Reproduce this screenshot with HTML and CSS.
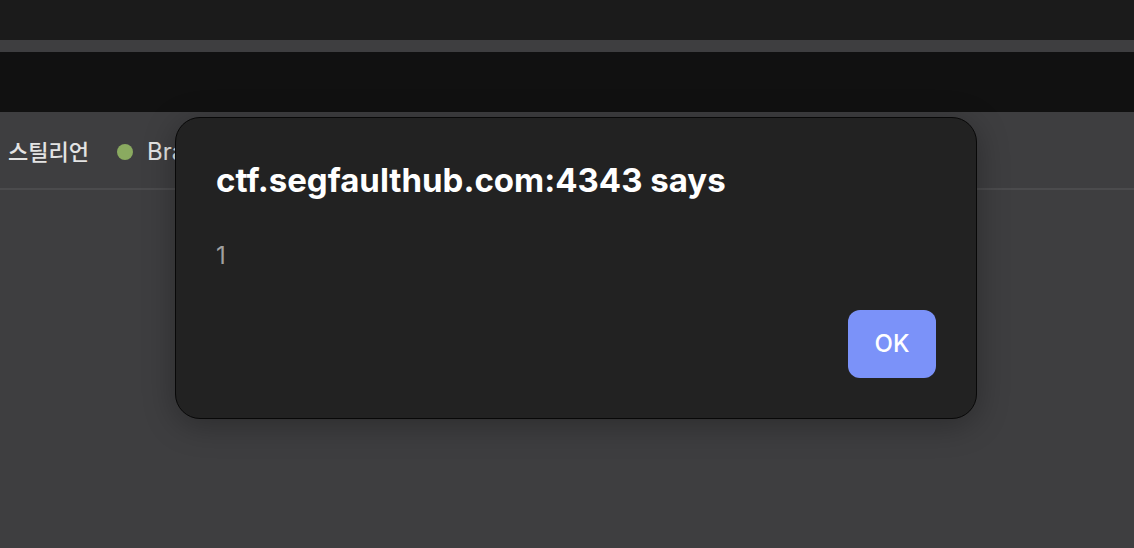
FILE: index.html
```html
<!DOCTYPE html>
<html lang="en">
<head>
<meta charset="utf-8">
<title>ctf.segfaulthub.com:4343</title>
<link rel="stylesheet" href="styles.css">
</head>
<body>
<div class="tab-strip"></div>
<div class="toolbar"></div>
<nav class="bookmarks">
  <a class="bookmark korean" href="#" lang="ko">스틸리언</a>
  <a class="bookmark" href="#"><span class="dot"></span>Brave</a>
</nav>
<div class="dialog" role="alertdialog" aria-labelledby="title" aria-describedby="message">
  <h1 class="title" id="title">ctf.segfaulthub.com:4343 says</h1>
  <p class="message" id="message">1</p>
  <div class="actions"><button class="ok" type="button">OK</button></div>
</div>
</body>
</html>
```
FILE: styles.css
```css
* { box-sizing: border-box; }
body {
  margin: 0;
  min-height: 100vh;
  background: #3e3e40;
  color: #e3e3e3;
  font-family: Inter, "Noto Sans CJK KR", sans-serif;
  overflow: hidden;
}
.tab-strip {
  height: 52px;
  background: #1b1b1b;
  border-bottom: 12px solid #3e3e40;
}
.toolbar { height: 60px; background: #111111; }
.bookmarks {
  display: flex;
  align-items: center;
  gap: 28px;
  height: 78px;
  padding: 4px 8px 0;
  border-bottom: 2px solid #4b4b4d;
}
.bookmark {
  display: flex;
  align-items: center;
  gap: 14px;
  color: inherit;
  font-size: 24px;
  line-height: 32px;
  text-decoration: none;
}
.korean { font-size: 22px; font-weight: 500; }
.dot { width: 16px; height: 16px; border-radius: 50%; background: #8aaa60; }
.dialog {
  position: absolute;
  top: 117px;
  left: 175px;
  right: 157px;
  padding: 40px;
  border: 1px solid #080808;
  border-radius: 25px;
  background: #222222;
  box-shadow: 0 6px 32px rgba(0, 0, 0, 0.3);
}
.title {
  margin: 0;
  color: #ffffff;
  font-size: 33px;
  line-height: 44px;
  font-weight: 700;
}
.message {
  margin: 38px 0 0;
  color: #a0a0a0;
  font-size: 24px;
  line-height: 32px;
}
.actions { display: flex; justify-content: flex-end; margin-top: 38px; }
.ok {
  min-width: 88px;
  padding: 0 24px;
  border: 0;
  border-radius: 12px;
  background: #7b92f9;
  color: #ffffff;
  font-family: inherit;
  font-size: 24px;
  font-weight: 500;
  line-height: 68px;
}
```
